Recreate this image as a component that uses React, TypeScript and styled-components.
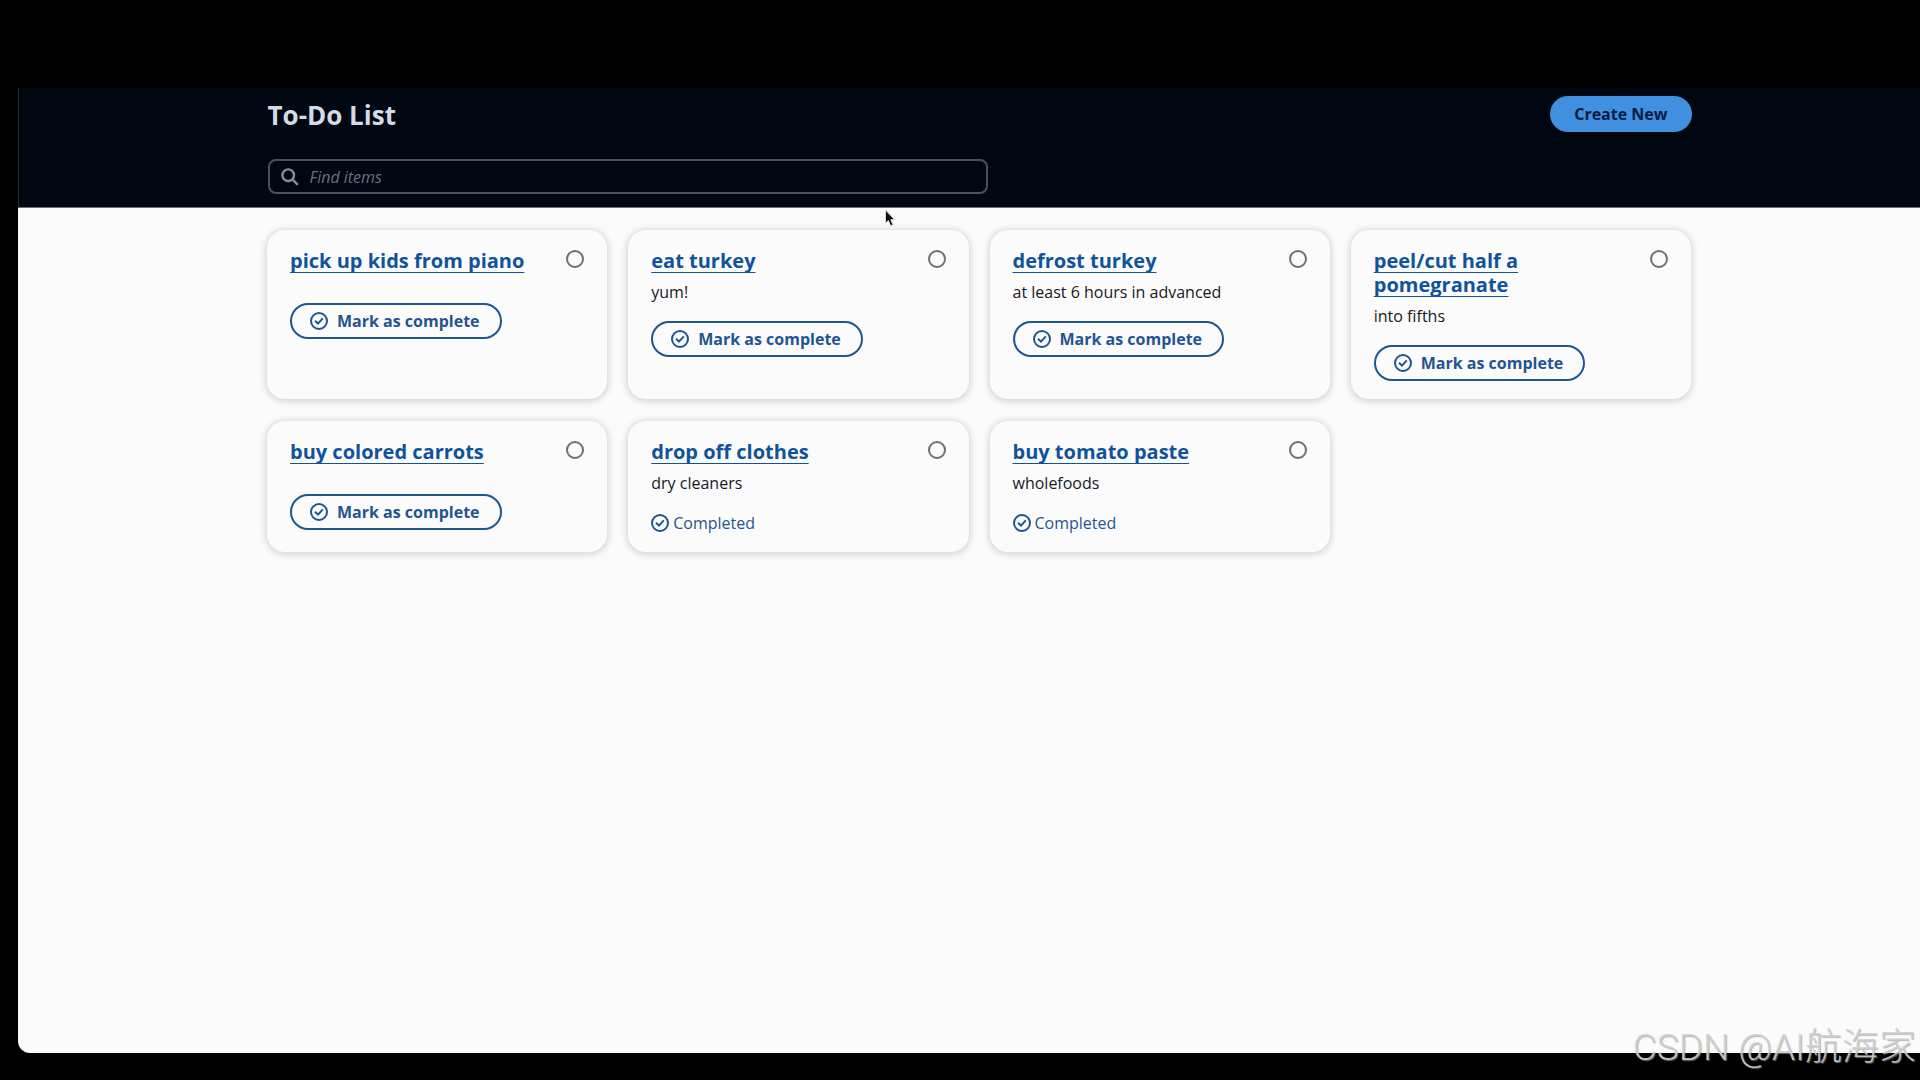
import React, { useState } from "react";
import styled, { createGlobalStyle } from "styled-components";

const GlobalStyle = createGlobalStyle`
  *, *::before, *::after { box-sizing: border-box; }
  body {
    margin: 0;
    background: #000000;
    font-family: "Open Sans", "Noto Sans", sans-serif;
    font-size: 16px;
    line-height: 22px;
    color: #16191f;
  }
`;

const Screen = styled.div`
  position: relative;
  display: flex;
  flex-direction: column;
  min-height: 100vh;
  padding: 88px 0 27px 18px;
  overflow: hidden;
`;

const AppWindow = styled.div`
  flex: 1;
  display: flex;
  flex-direction: column;
  background: #fbfbfb;
  border-radius: 0 0 0 12px;
`;

const Header = styled.header`
  background: #000711;
  border-left: 1px solid #252b32;
  border-bottom: 1px solid #6c7178;
  padding: 8px 0 13px;
`;

const Container = styled.div`
  max-width: 1424px;
  margin: 0 auto;
`;

const Gutter = styled.div`
  padding-left: 20px;
`;

const TitleRow = styled.div`
  display: flex;
  align-items: flex-start;
  justify-content: space-between;
  margin-bottom: 25px;
`;

const PageTitle = styled.h1`
  margin: 0;
  font-size: 26px;
  line-height: 38px;
  font-weight: 700;
  color: #d5dbe6;
`;

const PrimaryButton = styled.button`
  height: 36px;
  padding: 0 24px;
  border: 0;
  border-radius: 18px;
  background: #4190e0;
  color: #031c43;
  font: 700 16px/22px "Open Sans", "Noto Sans", sans-serif;
`;

const SearchField = styled.label`
  display: flex;
  align-items: center;
  gap: 11px;
  max-width: 720px;
  height: 35px;
  padding: 0 11px;
  border: 2px solid #4a515c;
  border-radius: 8px;
  color: #868c96;
`;

const SearchInput = styled.input`
  flex: 1;
  min-width: 0;
  padding: 0;
  border: 0;
  outline: 0;
  background: transparent;
  color: #d5dbe6;
  font: 400 16px/22px "Open Sans", "Noto Sans", sans-serif;
  &::placeholder {
    color: #6a707b;
    font-style: italic;
    opacity: 1;
  }
`;

const CardGrid = styled.ul`
  display: grid;
  grid-template-columns: repeat(auto-fill, minmax(330px, 1fr));
  gap: 22px 21px;
  margin: 0;
  padding: 22px 0;
  list-style: none;
`;

const Card = styled.li`
  display: flex;
  align-items: flex-start;
  justify-content: space-between;
  gap: 22px;
  padding: 19px 23px 18px;
  border-radius: 18px;
  background: #fbfbfb;
  box-shadow: 0 1px 6px 2px rgba(0, 7, 22, 0.14);
`;

const CardBody = styled.div`
  min-width: 0;
`;

const CardTitle = styled.h2`
  margin: 0 0 8px;
  font-size: 20px;
  line-height: 24px;
  font-weight: 700;
`;

const CardLink = styled.a`
  color: #10539c;
  text-decoration: underline 1px;
  text-underline-offset: 4px;
  text-decoration-skip-ink: none;
`;

const Description = styled.p`
  margin: 0;
`;

const Action = styled.div<{ $spaced: boolean }>`
  padding-top: ${(p) => (p.$spaced ? 18 : 22)}px;
`;

const OutlineButton = styled.button`
  display: flex;
  align-items: center;
  gap: 9px;
  height: 36px;
  padding: 0 20px 0 18px;
  border: 2px solid #1f5590;
  border-radius: 18px;
  background: #fbfbfb;
  color: #1f5590;
  font: 700 16px/22px "Open Sans", "Noto Sans", sans-serif;
`;

const Status = styled.span`
  display: flex;
  align-items: center;
  gap: 4px;
  color: #1f5590;
`;

const CardRadio = styled.input`
  appearance: none;
  flex: none;
  width: 18px;
  height: 18px;
  margin: 1px 0 0;
  border: 2px solid #6c7075;
  border-radius: 50%;
  &:checked {
    border: 5px solid #1f5590;
  }
`;

const Pointer = styled.svg`
  position: absolute;
  left: 884px;
  top: 208px;
`;

const Watermark = styled.div`
  position: absolute;
  right: 4px;
  bottom: 8px;
  font: 300 37px/48px Roboto, "Noto Sans CJK SC", sans-serif;
  color: rgba(208, 208, 208, 0.9);
  text-shadow: 1px 1px 1px rgba(150, 150, 150, 0.7);
  white-space: nowrap;
`;

const CheckIcon = () => (
  <svg width="18" height="18" viewBox="0 0 18 18" fill="none" stroke="currentColor" strokeWidth="2" aria-hidden="true">
    <circle cx="9" cy="9" r="8" />
    <path d="M5 8.8 L8 11.6 L12.8 6.4" />
  </svg>
);

const SearchIcon = () => (
  <svg width="18" height="18" viewBox="0 0 18 18" fill="none" stroke="currentColor" strokeWidth="2.4" aria-hidden="true">
    <circle cx="7.2" cy="7.2" r="5.8" />
    <path d="M11.4 11.4 L16.8 16.8" />
  </svg>
);

type Item = { id: number; name: string; description?: string; done?: boolean };

const initialItems: Item[] = [
  { id: 1, name: "pick up kids from piano" },
  { id: 2, name: "eat turkey", description: "yum!" },
  { id: 3, name: "defrost turkey", description: "at least 6 hours in advanced" },
  { id: 4, name: "peel/cut half a pomegranate", description: "into fifths" },
  { id: 5, name: "buy colored carrots" },
  { id: 6, name: "drop off clothes", description: "dry cleaners", done: true },
  { id: 7, name: "buy tomato paste", description: "wholefoods", done: true },
];

export default function App() {
  const [items, setItems] = useState(initialItems);
  const [query, setQuery] = useState("");
  const complete = (id: number) =>
    setItems((list) => list.map((i) => (i.id === id ? { ...i, done: true } : i)));
  const visible = items.filter((i) => i.name.toLowerCase().includes(query.toLowerCase()));

  return (
    <Screen>
      <GlobalStyle />
      <AppWindow>
        <Header>
          <Gutter>
            <Container>
              <TitleRow>
                <PageTitle>To-Do List</PageTitle>
                <PrimaryButton type="button">Create New</PrimaryButton>
              </TitleRow>
              <SearchField>
                <SearchIcon />
                <SearchInput
                  type="text"
                  aria-label="Find items"
                  placeholder="Find items"
                  value={query}
                  onChange={(e) => setQuery(e.target.value)}
                />
              </SearchField>
            </Container>
          </Gutter>
        </Header>
        <Gutter as="main">
          <Container>
            <CardGrid>
              {visible.map((item) => (
                <Card key={item.id}>
                  <CardBody>
                    <CardTitle>
                      <CardLink href="#">{item.name}</CardLink>
                    </CardTitle>
                    {item.description && <Description>{item.description}</Description>}
                    <Action $spaced={Boolean(item.description)}>
                      {item.done ? (
                        <Status>
                          <CheckIcon />
                          Completed
                        </Status>
                      ) : (
                        <OutlineButton type="button" onClick={() => complete(item.id)}>
                          <CheckIcon />
                          Mark as complete
                        </OutlineButton>
                      )}
                    </Action>
                  </CardBody>
                  <CardRadio type="radio" name="selected-item" aria-label={`Select ${item.name}`} />
                </Card>
              ))}
            </CardGrid>
          </Container>
        </Gutter>
      </AppWindow>
      <Pointer width="12" height="20" viewBox="0 0 12 20" aria-hidden="true">
        <path
          d="M1.5 2 L1.5 15 L4.4 12.6 L6.6 17.8 L9 16.8 L6.8 11.8 L10.6 11.6 Z"
          fill="#111111"
          stroke="#d8d8d8"
          strokeWidth="1"
        />
      </Pointer>
      <Watermark>CSDN @AI航海家</Watermark>
    </Screen>
  );
}
